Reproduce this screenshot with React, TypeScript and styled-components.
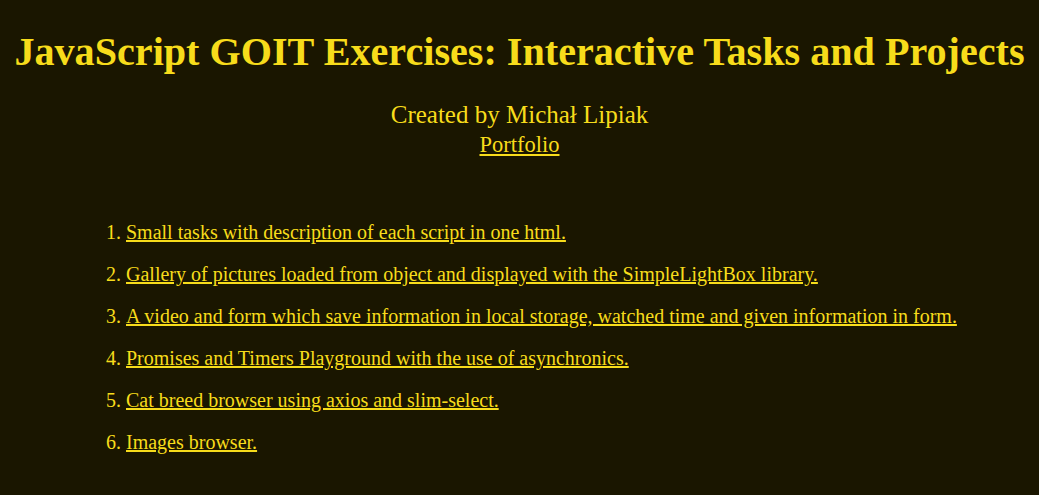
import React from "react";
import styled, { createGlobalStyle } from "styled-components";

const Global = createGlobalStyle`
  html, body { margin: 0; padding: 0; background: #1a1600; }
  body { font-family: "Liberation Serif", "Times New Roman", serif; color: #f7dc1b; }
`;

const Page = styled.main`
  display: flex;
  flex-direction: column;
  align-items: center;
  padding-top: 29px;
`;

const Title = styled.h1`
  margin: 0;
  font-size: 40.15px;
  line-height: 46px;
  font-weight: bold;
  text-align: center;
  white-space: nowrap;
  color: #f7dc1b;
`;

const Author = styled.p`
  margin: 26px 0 0;
  font-size: 25px;
  line-height: 28px;
  text-align: center;
`;

const Link = styled.a`
  color: #f7dc1b;
  text-decoration: underline;
`;

const PortfolioLink = styled(Link)`
  margin-top: 2px;
  font-size: 22.5px;
  line-height: 28px;
`;

const List = styled.ol`
  align-self: stretch;
  margin: 62px 0 0;
  padding-left: 126px;
  font-size: 20px;
  display: flex;
  flex-direction: column;
  gap: 19px;
`;

const Item = styled.li`
  line-height: 23px;
`;

const tasks = [
  "Small tasks with description of each script in one html.",
  "Gallery of pictures loaded from object and displayed with the SimpleLightBox library.",
  "A video and form which save information in local storage, watched time and given information in form.",
  "Promises and Timers Playground with the use of asynchronics.",
  "Cat breed browser using axios and slim-select.",
  "Images browser.",
];

export default function App() {
  return (
    <>
      <Global />
      <Page>
        <Title>JavaScript GOIT Exercises: Interactive Tasks and Projects</Title>
        <Author>Created by Michał Lipiak</Author>
        <PortfolioLink href="#">Portfolio</PortfolioLink>
        <List>
          {tasks.map((t) => (
            <Item key={t}>
              <Link href="#">{t}</Link>
            </Item>
          ))}
        </List>
      </Page>
    </>
  );
}
